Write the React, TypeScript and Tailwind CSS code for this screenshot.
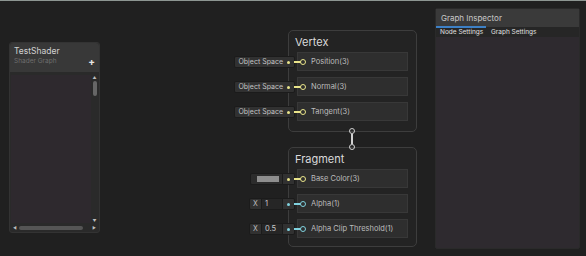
import React from 'react';

const font = { fontFamily: 'Inter, "Noto Sans", sans-serif' };

type Port = {
  label: string;
  color: string;
  input: React.ReactNode;
};

function Dot({ color }: { color: string }) {
  return (
    <div className="w-[11px] h-full flex items-center justify-center">
      <div className="w-[3px] h-[3px] rounded-full" style={{ backgroundColor: color }} />
    </div>
  );
}

function SpaceInput({ color }: { color: string }) {
  return (
    <div className="flex h-full w-max bg-[#313131] border border-[#1b1b1b] rounded-[2px]">
      <span className="pl-[3px] text-[7px] leading-[10px] whitespace-nowrap text-[#c4c4c4]">Object Space</span>
      <Dot color={color} />
    </div>
  );
}

function ColorInput({ color }: { color: string }) {
  return (
    <div className="flex h-full w-max">
      <div className="w-[33px] h-full bg-[#2c2c2c] border border-[#1b1b1b] rounded-l-[2px] flex items-center pl-[6px]">
        <div className="w-[22px] h-[6px] bg-[#8e8e8e]" />
      </div>
      <div className="h-full bg-[#313131] border border-l-0 border-[#1b1b1b] rounded-r-[2px]">
        <Dot color={color} />
      </div>
    </div>
  );
}

function FloatInput({ value, color }: { value: string; color: string }) {
  return (
    <div className="flex h-full w-max">
      <div className="w-[13px] h-full bg-[#313131] border border-[#1b1b1b] rounded-l-[2px] flex items-center justify-center text-[7px] text-[#bdbdbd]">
        X
      </div>
      <div className="w-[20px] h-full bg-[#262626] border-y border-[#1b1b1b] flex items-center pl-[3px] text-[7.5px] text-[#c8c8c8]">
        {value}
      </div>
      <div className="h-full bg-[#313131] border border-[#1b1b1b] rounded-r-[2px]">
        <Dot color={color} />
      </div>
    </div>
  );
}

function PortRow({ port }: { port: Port }) {
  return (
    <div className="relative h-[19px] bg-[#2e2e2e] border border-[#383838] flex items-center">
      <div className="absolute right-[calc(100%+3px)] top-[3px] h-[12px]">{port.input}</div>
      <div
        className="absolute left-[-4px] top-[8px] w-[7px] h-[2px]"
        style={{ backgroundColor: port.color }}
      />
      <div
        className="absolute left-[2px] top-[6px] w-[6px] h-[6px] rounded-full border-[1.5px] bg-[#2e2e2e]"
        style={{ borderColor: port.color }}
      />
      <span className="pl-[13px] text-[7.5px] text-[#bcbcbc] whitespace-nowrap">{port.label}</span>
    </div>
  );
}

function GraphNode({
  title,
  ports,
  className,
}: {
  title: string;
  ports: Port[];
  className: string;
}) {
  return (
    <div className={`absolute rounded-[5px] border border-[#3d3d3d] bg-[#232323] ${className}`}>
      <div className="h-[21px] pl-[6px] pt-[5px] text-[11px] leading-[13px] text-[#dadada]">{title}</div>
      <div className="px-[8px] flex flex-col gap-[6px]">
        {ports.map((p) => (
          <PortRow key={p.label} port={p} />
        ))}
      </div>
    </div>
  );
}

const yellow = '#e9e48a';
const cyan = '#80d2df';

const vertexPorts: Port[] = [
  { label: 'Position(3)', color: yellow, input: <SpaceInput color={yellow} /> },
  { label: 'Normal(3)', color: yellow, input: <SpaceInput color={yellow} /> },
  { label: 'Tangent(3)', color: yellow, input: <SpaceInput color={yellow} /> },
];

const fragmentPorts: Port[] = [
  { label: 'Base Color(3)', color: yellow, input: <ColorInput color={yellow} /> },
  { label: 'Alpha(1)', color: cyan, input: <FloatInput value="1" color={cyan} /> },
  { label: 'Alpha Clip Threshold(1)', color: cyan, input: <FloatInput value="0.5" color={cyan} /> },
];

function Blackboard() {
  return (
    <div className="absolute left-[9px] top-[41px] w-[91px] h-[191px] rounded-[3px] border border-[#333] bg-[#2a2a2a] flex flex-col">
      <div className="h-[29px] bg-[#383838] rounded-t-[3px] relative px-[4px] pt-[2px]">
        <div className="text-[8.5px] leading-[12px] text-[#d2d2d2]">TestShader</div>
        <div className="text-[6.5px] leading-[9px] text-[#6e6e6e]">Shader Graph</div>
        <div className="absolute right-[4px] top-[13px] text-[10px] leading-[10px] font-bold text-[#e6e6e6]">+</div>
      </div>
      <div className="flex-1 flex pt-[3px] pl-[1px] pr-[1px]">
        <div className="flex-1 bg-[#2e292e]" />
        <div className="w-[7px] flex flex-col items-center text-[#bdbdbd] text-[4px] leading-[5px]">
          <span>▲</span>
          <div className="mt-[1px] w-[4px] h-[15px] rounded-[2px] bg-[#666]" />
          <div className="flex-1" />
          <span>▼</span>
        </div>
      </div>
      <div className="h-[9px] flex items-center px-[3px] gap-[2px] text-[#bdbdbd] text-[4px]">
        <span>◀</span>
        <div className="w-[64px] h-[4px] rounded-[2px] bg-[#555]" />
        <div className="flex-1" />
        <span>▶</span>
      </div>
    </div>
  );
}

function Inspector() {
  return (
    <div className="absolute left-[435px] top-[7px] w-[145px] h-[241px] rounded-[2px] bg-[#2e2a2f] border border-[#2a2a2a] flex flex-col">
      <div className="h-[18px] bg-[#3a3a3a] pl-[5px] flex items-center text-[8px] text-[#c8c8c8]">Graph Inspector</div>
      <div className="h-[10px] bg-[#262626] flex text-[6.5px] leading-[9px] text-[#e0e0e0]">
        <div className="relative w-[50px] pl-[4px] pt-[1px]">
          <div className="absolute left-0 top-[-1px] w-full h-[2px] bg-[#3d80c5]" />
          Node Settings
        </div>
        <div className="pl-[5px] pt-[1px]">Graph Settings</div>
      </div>
      <div className="flex-1" />
    </div>
  );
}

export default function App() {
  return (
    <div className="relative w-[586px] h-[256px] overflow-hidden bg-[#202020] border-t border-[#8d9692]" style={font}>
      <Blackboard />
      <GraphNode title="Vertex" ports={vertexPorts} className="left-[288px] top-[29px] w-[129px] h-[102px]" />
      <GraphNode title="Fragment" ports={fragmentPorts} className="left-[288px] top-[146px] w-[129px] h-[100px]" />
      {/* link between the two context blocks */}
      <div className="absolute left-[348px] top-[127px] w-[8px] h-[22px] flex flex-col items-center">
        <div className="w-[6px] h-[6px] rounded-full border-[1.5px] border-[#d0d0d0]" />
        <div className="w-[2px] flex-1 bg-[#d0d0d0]" />
        <div className="w-[6px] h-[6px] rounded-full border-[1.5px] border-[#d0d0d0]" />
      </div>
      <Inspector />
    </div>
  );
}
